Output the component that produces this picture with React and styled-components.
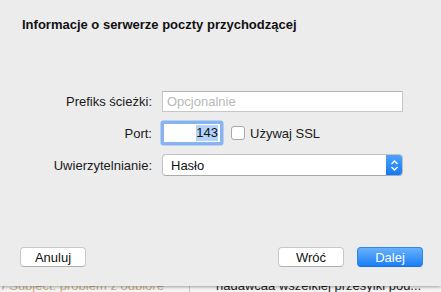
import React from 'react'
import styled, { createGlobalStyle } from 'styled-components';

const GlobalStyle = createGlobalStyle`
    html, body {
        margin: 0;
        padding: 0;
        width: 441px;
        height: 292px;
        overflow: hidden;
        background: #ffffff;
        font-family: "Liberation Sans", Arial, sans-serif;
    }
`;

const App = () => {
  return (
    <Page>
        <GlobalStyle />
        <Sheet>
            <Title>Informacje o serwerze poczty przychodzącej</Title>

            <Form>
                <Label>Prefiks ścieżki:</Label>
                <Field>
                    <TextInput placeholder="Opcjonalnie" />
                </Field>

                <Label>Port:</Label>
                <Field>
                    <PortInput>
                        <Selected>143</Selected>
                    </PortInput>
                    <Checkbox />
                    <CheckLabel>Używaj SSL</CheckLabel>
                </Field>

                <Label>Uwierzytelnianie:</Label>
                <Field>
                    <Select>
                        <SelectValue>Hasło</SelectValue>
                        <Stepper>
                            <svg width="9" height="13" viewBox="0 0 9 13">
                                <path d="M1.5 5 L4.5 2 L7.5 5" fill="none" stroke="#fff" strokeWidth="1.4" />
                                <path d="M1.5 8 L4.5 11 L7.5 8" fill="none" stroke="#fff" strokeWidth="1.4" />
                            </svg>
                        </Stepper>
                    </Select>
                </Field>
            </Form>

            <ButtonBar>
                <Button>Anuluj</Button>
                <RightButtons>
                    <Button>Wróć</Button>
                    <Button primary>Dalej</Button>
                </RightButtons>
            </ButtonBar>
        </Sheet>

        <Behind>
            <LeftPane><PaneText>/ Subject: problem z odbiore</PaneText></LeftPane>
            <RightPane><PaneText>nadawcaa wszelkiej przesylki pod...</PaneText></RightPane>
        </Behind>
    </Page>
  )
}

export default App;

const Page = styled.div`
    display: flex;
    flex-direction: column;
    width: 441px;
    height: 292px;
`;

const Sheet = styled.div`
    position: relative;
    z-index: 1;
    flex-shrink: 0;
    display: flex;
    flex-direction: column;
    height: 286px;
    box-sizing: border-box;
    padding: 17px 18px 19px 20px;
    background: #ececec;
    box-shadow: 0 1px 3px rgba(0, 0, 0, 0.35);
`;

const Title = styled.div`
    padding-left: 2px;
    font-size: 13px;
    line-height: 16px;
    font-weight: bold;
    color: #111;
`;

const Form = styled.div`
    display: grid;
    grid-template-columns: 132px 241px;
    column-gap: 10px;
    row-gap: 10px;
    grid-auto-rows: 22px;
    margin-top: 57px;
`;

const Label = styled.div`
    display: flex;
    align-items: center;
    justify-content: flex-end;
    font-size: 13px;
    color: #1a1a1a;
`;

const Field = styled.div`
    display: flex;
    align-items: center;
`;

const TextInput = styled.input`
    width: 241px;
    height: 21px;
    box-sizing: border-box;
    border: 1px solid #c6c6c6;
    border-top-color: #b4b4b4;
    background: #fff;
    padding: 0 4px;
    font-family: inherit;
    font-size: 13px;
    outline: none;
    &::placeholder {
        color: #b8b8b8;
    }
`;

const PortInput = styled.div`
    display: flex;
    align-items: center;
    justify-content: flex-end;
    width: 58px;
    height: 20px;
    box-sizing: border-box;
    margin-left: 1px;
    padding-right: 2px;
    background: #fff;
    border: 1px solid #8ab4ec;
    box-shadow: 0 0 0 2.5px #87b3f2;
    border-radius: 1px;
    font-size: 13px;
    color: #111;
`;

const Selected = styled.span`
    background: #b3d3fb;
    line-height: 16px;
`;

const Checkbox = styled.div`
    width: 12px;
    height: 12px;
    margin-left: 10px;
    border: 1px solid #a9a9a9;
    border-radius: 3px;
    background: #fff;
`;

const CheckLabel = styled.span`
    margin-left: 5px;
    font-size: 13px;
    color: #1a1a1a;
`;

const Select = styled.div`
    display: flex;
    width: 241px;
    height: 22px;
    box-sizing: border-box;
    border: 1px solid #c2c2c2;
    border-bottom-color: #aaaaaa;
    border-radius: 4px;
    background: #fff;
    overflow: hidden;
`;

const SelectValue = styled.div`
    flex: 1;
    display: flex;
    align-items: center;
    padding-left: 8px;
    font-size: 13px;
    color: #111;
`;

const Stepper = styled.div`
    display: flex;
    align-items: center;
    justify-content: center;
    width: 16px;
    background: linear-gradient(#4fa2fc, #1479f6);
`;

const ButtonBar = styled.div`
    display: flex;
    justify-content: space-between;
    align-items: center;
    margin-top: auto;
`;

const RightButtons = styled.div`
    display: flex;
    gap: 13px;
`;

const Button = styled.div`
    display: flex;
    align-items: center;
    justify-content: center;
    width: 66px;
    height: 20px;
    box-sizing: border-box;
    border-radius: 4px;
    font-size: 13px;
    color: ${props => props.primary ? '#ffffff' : '#111111'};
    background: ${props => props.primary
        ? 'linear-gradient(#69b1fb, #1a7ef6)'
        : '#ffffff'};
    border: 1px solid ${props => props.primary ? '#2a86f4' : '#c8c8c8'};
    border-bottom-color: ${props => props.primary ? '#1670e4' : '#b0b0b0'};
`;

const Behind = styled.div`
    display: flex;
    flex: 1;
    overflow: hidden;
    background: #f4f4f4;
`;

const LeftPane = styled.div`
    width: 187px;
    border-right: 1px solid #c9c9c9;
    padding-left: 2px;
    color: #c9ad83;
    overflow: hidden;
`;

const RightPane = styled.div`
    flex: 1;
    padding-left: 26px;
    color: #222;
    overflow: hidden;
`;

const PaneText = styled.div`
    margin-top: -7px;
    font-size: 13px;
    line-height: 14px;
    white-space: nowrap;
`;
